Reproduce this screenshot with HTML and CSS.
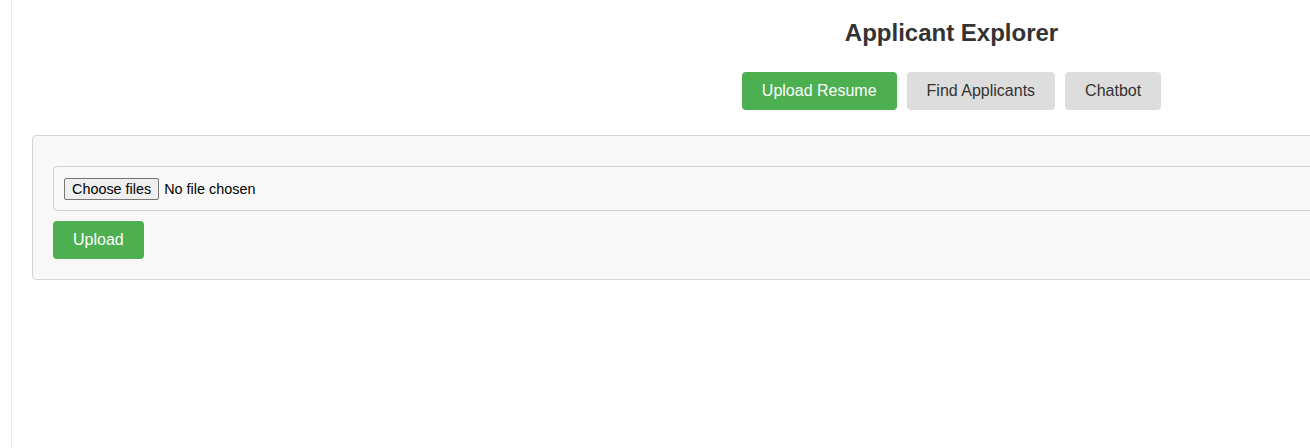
FILE: index.html
```html
<!DOCTYPE html>
<html lang="en">
<head>
<meta charset="utf-8">
<title>Applicant Explorer</title>
<link rel="stylesheet" href="styles.css">
</head>
<body>
<div class="layout">
  <aside class="sidebar"></aside>
  <main class="main">
    <header class="header">
      <h1 class="title">Applicant Explorer</h1>
      <nav class="tabs">
        <button class="tab tab-active">Upload Resume</button>
        <button class="tab">Find Applicants</button>
        <button class="tab">Chatbot</button>
      </nav>
    </header>
    <section class="panel">
      <div class="file-box">
        <span class="file-btn">Choose files</span>
        <span class="file-label">No file chosen</span>
      </div>
      <button class="upload-btn">Upload</button>
    </section>
  </main>
</div>
</body>
</html>
```
FILE: styles.css
```css
html, body {
  margin: 0;
  padding: 0;
  background: #ffffff;
  overflow: hidden;
  height: 100%;
}
body {
  font-family: "Liberation Sans", Arial, sans-serif;
  color: #333;
}
.layout {
  display: flex;
  height: 100vh;
  width: 1891px;
}
.sidebar {
  width: 11px;
  flex: none;
  border-right: 1px solid #e8e8e8;
}
.main {
  flex: 1;
  padding: 16px 20px 20px;
}
.header {
  display: flex;
  flex-direction: column;
  align-items: center;
}
.title {
  margin: 0;
  font-size: 24px;
  line-height: 34px;
  font-weight: bold;
  color: #333;
}
.tabs {
  display: flex;
  gap: 10px;
  margin-top: 22px;
}
.tab {
  font-family: "Liberation Sans", Arial, sans-serif;
  font-size: 16px;
  line-height: 18px;
  padding: 10px 20px;
  border: none;
  border-radius: 4px;
  background: #dddddd;
  color: #333;
}
.tab-active {
  background: #4caf50;
  color: #fff;
}
.panel {
  margin-top: 25px;
  background: #f8f8f8;
  border: 1px solid #d5d5d5;
  border-radius: 4px;
  padding: 30px 20px 20px;
  display: flex;
  flex-direction: column;
  align-items: flex-start;
  gap: 10px;
}
.file-box {
  align-self: stretch;
  display: flex;
  align-items: center;
  gap: 5px;
  height: 45px;
  box-sizing: border-box;
  padding: 0 10px;
  border: 1px solid #d0d0d0;
  border-radius: 4px;
  background: #f8f8f8;
  font-size: 14.4px;
  color: #000;
}
.file-btn {
  display: inline-block;
  height: 22px;
  box-sizing: border-box;
  padding: 2px 7px;
  line-height: 16px;
  border: 1px solid #767676;
  border-radius: 2px;
  background: #efefef;
  color: #000;
}
.upload-btn {
  font-family: "Liberation Sans", Arial, sans-serif;
  font-size: 16px;
  line-height: 18px;
  padding: 10px 20px;
  border: none;
  border-radius: 4px;
  background: #4caf50;
  color: #fff;
}
```
